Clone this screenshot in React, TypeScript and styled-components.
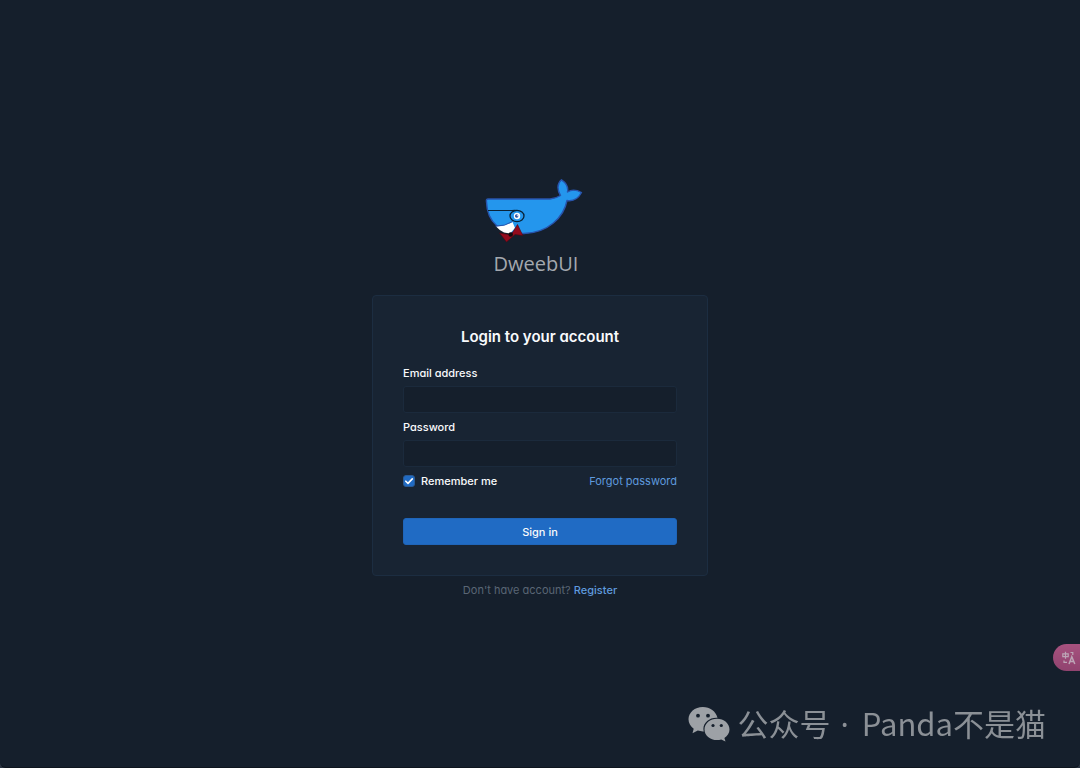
import React from "react";
import styled, { createGlobalStyle } from "styled-components";

const GlobalStyle = createGlobalStyle`
  *, *::before, *::after { box-sizing: border-box; }
  body {
    margin: 0;
    background: #2a3442;
    color: #f8fafc;
    font-family: Inter, "Liberation Sans", sans-serif;
    font-feature-settings: "cv03", "cv04", "cv11";
    font-size: 11px;
    line-height: 16px;
  }
`;

const Page = styled.div`
  min-height: 100vh;
  padding: 172px 16px 24px;
  display: flex;
  flex-direction: column;
  align-items: center;
  background: #151f2c;
  border-bottom: 1px solid #0e151e;
  border-radius: 0 0 6px 6px;
`;

const Container = styled.main`
  width: 100%;
  max-width: 336px;
`;

const Brand = styled.a`
  display: flex;
  flex-direction: column;
  align-items: center;
  margin-bottom: 17px;
  padding-right: 8px;
  color: #a3a8af;
  font-family: "Open Sans", sans-serif;
  font-size: 20px;
  line-height: 28px;
  text-decoration: none;
`;

const Whale = styled.svg`
  display: block;
  width: 120px;
  height: 78px;
`;

const Card = styled.form`
  display: flex;
  flex-direction: column;
  padding: 30px;
  background: #182433;
  border: 1px solid #1c2d41;
  border-radius: 4px;
`;

const Title = styled.h1`
  margin: 0 0 17px;
  font-size: 15px;
  line-height: 22px;
  font-weight: 600;
  text-align: center;
`;

const Label = styled.label`
  margin-bottom: 5px;
  font-weight: 500;
`;

const Input = styled.input`
  width: 100%;
  height: 27px;
  margin-bottom: 6px;
  padding: 4px 8px;
  color: inherit;
  font: inherit;
  background: #151f2c;
  border: 1px solid #1b2a3c;
  border-radius: 3px;
  outline-color: #206bc4;
`;

const Options = styled.div`
  display: flex;
  align-items: center;
  justify-content: space-between;
  margin-bottom: 29px;
`;

const CheckLabel = styled.label`
  display: flex;
  align-items: center;
  gap: 6px;
  font-weight: 500;
`;

const Checkbox = styled.input`
  appearance: none;
  width: 12px;
  height: 12px;
  margin: 0;
  border: 1px solid #2a5a94;
  border-radius: 3px;
  &:checked {
    background: #206bc4
      url("data:image/svg+xml,%3Csvg xmlns='http://www.w3.org/2000/svg' viewBox='0 0 10 10'%3E%3Cpath d='M1.8 5.2l2.2 2.2 4.3-4.5' fill='none' stroke='white' stroke-width='1.6' stroke-linecap='round' stroke-linejoin='round'/%3E%3C/svg%3E")
      center / 10px 10px no-repeat;
  }
`;

const Link = styled.a<{ $strong?: boolean }>`
  color: #5f9ade;
  font-weight: ${(p) => (p.$strong ? 500 : 400)};
  text-decoration: none;
`;

const Submit = styled.button`
  height: 27px;
  padding: 0 12px;
  color: #f8fafc;
  font: inherit;
  font-feature-settings: inherit;
  font-weight: 500;
  background: #206bc4;
  border: 1px solid #1f65b9;
  border-radius: 3px;
`;

const Footnote = styled.p`
  margin: 6px 0 0;
  color: #5a6675;
  text-align: center;
`;

const TranslateTab = styled.button`
  position: fixed;
  right: 0;
  bottom: 97px;
  display: flex;
  align-items: center;
  width: 27px;
  height: 27px;
  padding: 0 0 0 9px;
  color: #bda5b6;
  background: linear-gradient(#a7527f, #90436f);
  border: 0;
  border-radius: 14px 0 0 14px;
`;

const Watermark = styled.div`
  position: fixed;
  right: 34px;
  bottom: 22px;
  display: flex;
  align-items: center;
  gap: 7px;
  color: #8b9096;
  font-family: "Noto Sans CJK SC", sans-serif;
  font-size: 31px;
  line-height: 44px;
  white-space: pre;
`;

const Dot = styled.span`
  padding: 0 5px 0 2px;
  font-family: "Noto Sans", sans-serif;
`;

const WhaleLogo = () => (
  <Whale viewBox="0 0 120 78" aria-hidden="true">
    <path
      d="M12 27 H74 Q80 26.500 84.500 23.500 C81 18 81 11.500 85.500 7.800 C89.500 10.500 92.500 15 91.500 20 C96 17 101 18 105.500 20.500 C102 27 97 29.500 91 28.500 C88 45 72 61 48 61.500 C25 62 11 51 10.400 29 Q10.300 27 12 27Z"
      fill="#2496ed"
      stroke="#2854ad"
      strokeWidth="1.400"
      strokeLinejoin="round"
    />
    <path d="M20 54.500 Q29 54.500 36.500 50 L39 56 L34 61.500 L28 60.500 Q23 58 20 54.500Z" fill="#fff" />
    <path d="M19.500 54 Q29 54.500 36.500 49.500" fill="none" stroke="#2854ad" strokeWidth="1" />
    <path d="M35 63 L41.500 52.500 L46.800 63.500 L39 62.500 L30.500 70 L23.500 61 Z" fill="#930a1c" stroke="#500713" strokeWidth=".6" />
    <circle cx="34.700" cy="62.500" r="2.200" fill="#12080d" />
    <path d="M12 38.500 H36 Q39 38.300 41 38.500" fill="none" stroke="#092237" strokeWidth="1.200" />
    <ellipse cx="41" cy="44" rx="7" ry="5.600" fill="#2496ed" stroke="#092237" strokeWidth="1.300" />
    <circle cx="41" cy="44" r="3.200" fill="#fff" />
    <circle cx="40.700" cy="44" r="1.700" fill="#284a9e" />
    <circle cx="41.300" cy="43.700" r=".6" fill="#fff" />
  </Whale>
);

const TranslateIcon = () => (
  <svg width="14" height="14" viewBox="0 0 14 14" fill="none" stroke="currentColor" strokeWidth="1.2" aria-hidden="true">
    <path d="M.8 2.800h5.400v2.800H.8zM3.500.8v7M8.500 1.500h2.300v2.500M2 9.500v1.800h3" />
    <path d="M7 13 9.800 5.800 12.800 13M8 10.600h3.700" strokeWidth="1.500" />
  </svg>
);

const WeChatIcon = () => (
  <svg width="42" height="36" viewBox="0 0 42 36" aria-hidden="true">
    <path fill="#9da1a6" d="M14.800 1C6.800 1 .5 6.500.5 13.300c0 3.900 2 7.200 5.200 9.400L4.500 27.300l5.300-2.700c1.900.6 3.800.9 6 .8A12 12 0 0 1 15.400 23c0-6.300 5.800-11.200 13-11.200h1.100C28 5.500 22 1 14.800 1Z" />
    <path fill="#9da1a6" d="M29 12.800c-6.900 0-12.500 4.700-12.500 10.600S22.100 34 29 34c1.500 0 2.900-.2 4.200-.6l4.300 2.200-1.100-3.700c3.100-2 5.100-5 5.100-8.500 0-5.900-5.600-10.600-12.500-10.600Z" />
    <g fill="#151f2c">
      <circle cx="10" cy="9.700" r="1.900" />
      <circle cx="20" cy="9.700" r="1.900" />
      <circle cx="25" cy="19.500" r="1.600" />
      <circle cx="33.300" cy="19.500" r="1.600" />
    </g>
  </svg>
);

export default function App() {
  return (
    <>
      <GlobalStyle />
      <Page>
        <Container>
          <Brand href="#">
            <WhaleLogo />
            <span>DweebUI</span>
          </Brand>
          <Card onSubmit={(e) => e.preventDefault()}>
            <Title>Login to your account</Title>
            <Label htmlFor="email">Email address</Label>
            <Input id="email" type="email" />
            <Label htmlFor="password">Password</Label>
            <Input id="password" type="password" />
            <Options>
              <CheckLabel>
                <Checkbox type="checkbox" defaultChecked />
                Remember me
              </CheckLabel>
              <Link href="#">Forgot password</Link>
            </Options>
            <Submit type="submit">Sign in</Submit>
          </Card>
          <Footnote>
            Don't have account? <Link $strong href="#">Register</Link>
          </Footnote>
        </Container>
      </Page>
      <TranslateTab type="button" aria-label="Translate">
        <TranslateIcon />
      </TranslateTab>
      <Watermark>
        <WeChatIcon />
        <span>
          公众号<Dot> · </Dot>Panda不是猫
        </span>
      </Watermark>
    </>
  );
}
